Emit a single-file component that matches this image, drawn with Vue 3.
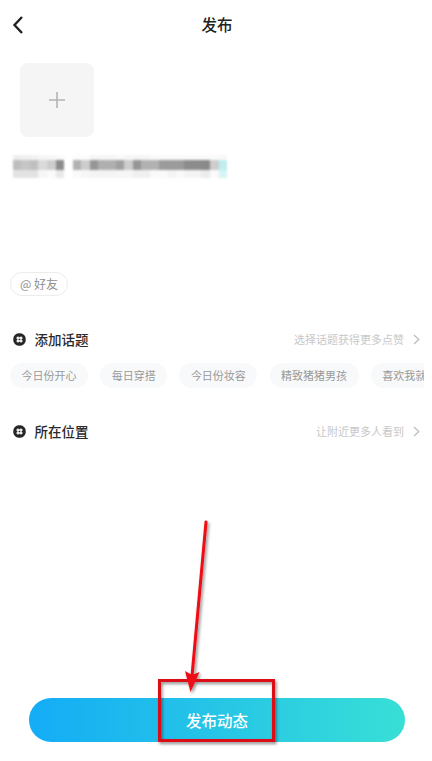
<script setup>
const chips = ['今日份开心', '每日穿搭', '今日份妆容', '精致猪猪男孩', '喜欢我就关注我']
const rows = [
  [238,240,242,245,248,250,0,252,252,246,246,246,250,246,246,246,250,250,250,250,250,250,250,250,248],
  [190,198,192,218,205,140,0,178,205,150,175,175,160,205,150,178,178,155,155,155,140,140,138,205,205],
  [226,226,226,246,250,232,0,250,246,244,244,244,246,246,240,240,250,250,244,250,244,244,236,250,225],
]
const cellColor = (v, c, r) => (c === 24 && r > 0 ? (r === 1 ? '#bfeeee' : '#d6f4f4') : `rgb(${v},${v},${v})`)
</script>

<template>
  <div class="page">
    <header class="bar">
      <svg class="back" width="12" height="20" viewBox="0 0 12 20"><path d="M10 2 2.5 10 10 18" fill="none" stroke="#222" stroke-width="2.4" /></svg>
      <h1>发布</h1>
    </header>

    <div class="add">
      <svg width="16" height="16" viewBox="0 0 16 16"><path d="M8 0v16M0 8h16" stroke="#b4b4b4" stroke-width="1.6" fill="none" /></svg>
    </div>

    <div class="mosaic">
      <div v-for="(row, r) in rows" :key="r" class="mrow" :class="'r' + r">
        <i v-for="(v, c) in row" :key="c" :style="{ background: v ? cellColor(v, c, r) : 'transparent' }"></i>
      </div>
    </div>

    <div class="at">@ 好友</div>

    <section class="sec first">
      <div class="sechead">
        <svg width="13" height="13" viewBox="0 0 13 13"><rect x=".3" y=".3" width="12.400" height="12.400" rx="5.400" fill="#262626" /><path d="M5 3.500V9.500M8 3.500V9.500M3.500 5H9.500M3.500 8H9.500" stroke="#fff" stroke-width="1.300" fill="none" /></svg>
        <h2>添加话题</h2>
        <span class="hint">选择话题获得更多点赞</span>
        <svg class="arrow" width="7" height="11" viewBox="0 0 7 11"><path d="M1 1l4.800 4.500L1 10" fill="none" stroke="#bbb" stroke-width="1.200" /></svg>
      </div>
      <div class="chips">
        <span v-for="c in chips" :key="c" class="chip">{{ c }}</span>
      </div>
    </section>

    <section class="sec second">
      <div class="sechead">
        <svg width="13" height="13" viewBox="0 0 13 13"><rect x=".3" y=".3" width="12.400" height="12.400" rx="5.400" fill="#262626" /><path d="M5 3.500V9.500M8 3.500V9.500M3.500 5H9.500M3.500 8H9.500" stroke="#fff" stroke-width="1.300" fill="none" /></svg>
        <h2>所在位置</h2>
        <span class="hint">让附近更多人看到</span>
        <svg class="arrow" width="7" height="11" viewBox="0 0 7 11"><path d="M1 1l4.800 4.500L1 10" fill="none" stroke="#bbb" stroke-width="1.200" /></svg>
      </div>
    </section>

    <button class="publish">发布动态</button>

    <svg class="mark" width="432" height="761" viewBox="0 0 432 761">
      <defs>
        <filter id="sh" x="-20%" y="-20%" width="140%" height="140%"><feDropShadow dx="1.500" dy="2" stdDeviation="1.500" flood-color="#000" flood-opacity=".45" /></filter>
      </defs>
      <g filter="url(#sh)">
        <rect x="159.500" y="680.500" width="114" height="60" fill="none" stroke="#dc1116" stroke-width="3" />
        <path d="M206 522 192 676" stroke="#ee0f14" stroke-width="3" stroke-linecap="round" fill="none" />
        <path d="M185 671 192 675 199.500 672 190.500 692Z" fill="#ee0f14" />
      </g>
    </svg>
  </div>
</template>

<style>
html, body { margin: 0; background: #fff; }
</style>

<style scoped>
.page {
  position: relative;
  width: 432px;
  height: 761px;
  overflow: hidden;
  background: #fff;
  font-family: "Noto Sans CJK SC", "Noto Sans", sans-serif;
  display: flex;
  flex-direction: column;
}
.bar {
  position: relative;
  height: 50px;
  display: flex;
  align-items: center;
  justify-content: center;
  flex: none;
}
.back { position: absolute; left: 12px; top: 15px; }
h1 { margin: 0; font-size: 15.500px; font-weight: 500; color: #222; line-height: 1; transform: translateX(1px); }
.add {
  margin: 13px 0 0 20px;
  width: 74px;
  height: 74px;
  border-radius: 8px;
  background: #f5f5f5;
  display: flex;
  align-items: center;
  justify-content: center;
  flex: none;
}
.mosaic { margin: 18px 0 0 12.700px; filter: blur(.8px); flex: none; }
.mrow { display: flex; }
.mrow i { display: block; width: 8.580px; }
.r0 { height: 5px; }
.r1 { height: 10px; }
.r2 { height: 8px; }
.at {
  margin: 94px 0 0 10px;
  box-sizing: border-box;
  width: 58px;
  height: 24px;
  border: 1px solid #ececec;
  border-radius: 12px;
  font-size: 12px;
  line-height: 22px;
  text-align: center;
  color: #8f8f8f;
  flex: none;
}
.sec { padding: 0 12px 0 13px; flex: none; }
.first { margin-top: 33px; }
.second { margin-top: 33px; }
.sechead { display: flex; align-items: center; height: 20px; }
h2 { margin: 0 0 0 8.500px; font-size: 13.500px; font-weight: 500; color: #2a2a2a; line-height: 20px; }
.hint { margin-left: auto; font-size: 11px; color: #c8c8c8; line-height: 20px; }
.arrow { margin-left: 9px; }
.chips {
  margin: 14px 0 0 -3px;
  width: 414px;
  height: 25px;
  display: flex;
  gap: 12.200px;
  overflow: hidden;
}
.chip {
  flex: none;
  height: 25px;
  padding: 0 11.500px;
  border-radius: 12.500px;
  background: #f8f9fa;
  color: #999;
  font-size: 11px;
  line-height: 25px;
  white-space: nowrap;
}
.publish {
  margin: 257px 0 0 29px;
  width: 376px;
  height: 44px;
  flex: none;
  border: 0;
  padding: 0;
  border-radius: 22px;
  background: linear-gradient(90deg, #14acf6, #38dfd6);
  color: #fff;
  font-family: inherit;
  font-size: 15.500px;
  font-weight: 500;
}
.mark { position: absolute; left: 0; top: 0; pointer-events: none; }
</style>
